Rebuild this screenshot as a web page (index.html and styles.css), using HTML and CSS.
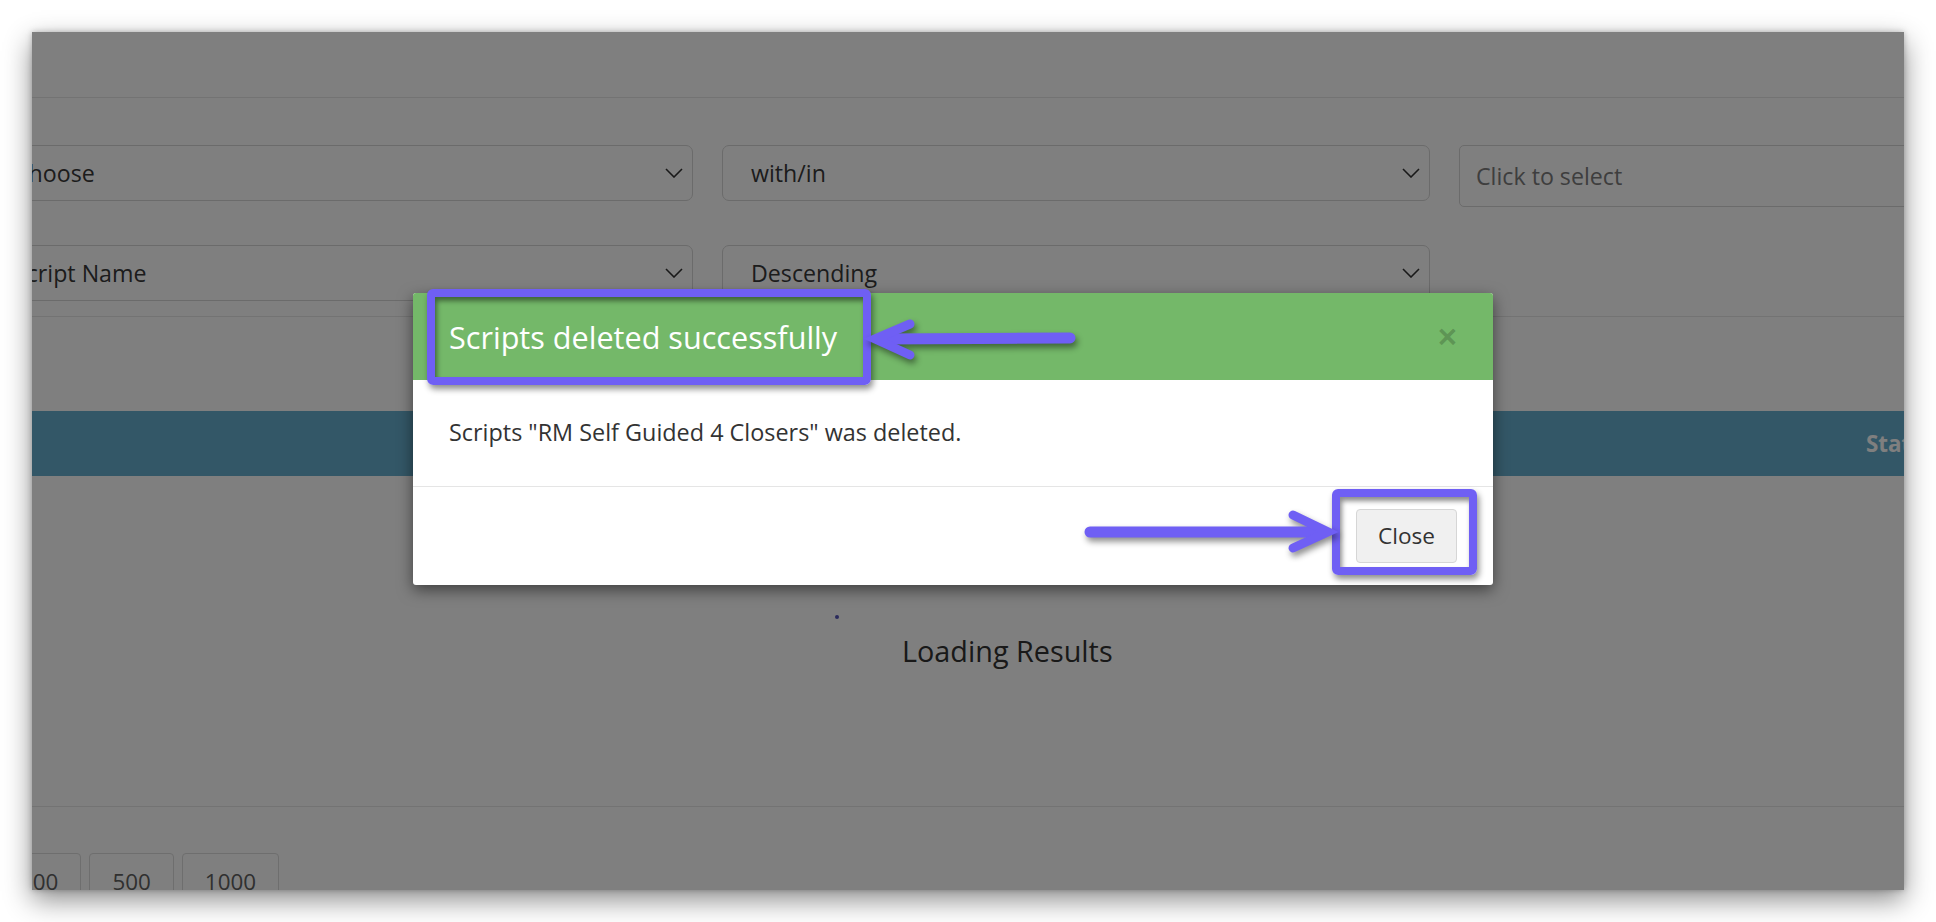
FILE: index.html
```html
<!DOCTYPE html>
<html lang="en">
<head>
<meta charset="utf-8">
<title>Scripts deleted successfully</title>
<link rel="stylesheet" href="styles.css">
</head>
<body>
<div class="shot">
  <div class="page">
    <div class="topbar"></div>
    <div class="filters">
      <div class="select"><span>Choose</span><svg class="chev" viewBox="0 0 18 10"><polyline points="1,1 9,9 17,1"/></svg></div>
      <div class="select"><span>with/in</span><svg class="chev" viewBox="0 0 18 10"><polyline points="1,1 9,9 17,1"/></svg></div>
      <div class="input"><span class="placeholder">Click to select</span></div>
      <div class="select"><span>Script Name</span><svg class="chev" viewBox="0 0 18 10"><polyline points="1,1 9,9 17,1"/></svg></div>
      <div class="select"><span>Descending</span><svg class="chev" viewBox="0 0 18 10"><polyline points="1,1 9,9 17,1"/></svg></div>
    </div>
    <div class="table-head"><div class="th th-main"></div><div class="th">Status</div></div>
    <div class="loading">
      <span class="loader-dot"></span>
      <h3 class="loading-text">Loading Results</h3>
    </div>
    <div class="pager">
      <button class="page-btn">100</button>
      <button class="page-btn">500</button>
      <button class="page-btn">1000</button>
    </div>
  </div>
  <div class="backdrop"></div>
  <div class="modal">
    <div class="modal-header">
      <h4 class="modal-title">Scripts deleted successfully</h4>
      <span class="close-x">×</span>
    </div>
    <div class="modal-body">
      <p>Scripts "RM Self Guided 4 Closers" was deleted.</p>
    </div>
    <div class="modal-footer">
      <button class="btn-close">Close</button>
    </div>
    <div class="mark mark-title"></div>
    <div class="mark mark-close"></div>
    <svg class="arrows" width="1080" height="292" viewBox="0 0 1080 292">
      <line class="shaft" x1="657" y1="45" x2="468" y2="46"/>
      <polyline class="head" points="497,31 462,46 497,62"/>
      <line class="shaft" x1="677" y1="239" x2="909" y2="239"/>
      <polyline class="head" points="880,222 915,239 880,255"/>
    </svg>
  </div>
</div>
</body>
</html>
```

FILE: styles.css
```css
* { box-sizing: border-box; }

html, body {
  margin: 0;
  padding: 0;
  background: #ffffff;
  overflow: hidden;
}

body {
  font-family: "Open Sans", "Noto Sans", sans-serif;
  color: #333333;
}

.shot {
  position: relative;
  margin: 32px;
  width: 1872px;
  height: 858px;
  overflow: hidden;
  background: #ffffff;
  box-shadow: 0 10px 26px rgba(0, 0, 0, 0.45), 0 0 6px rgba(0, 0, 0, 0.25);
}

.page {
  width: 2300px;
  margin-left: -47px;
  font-size: 23.2px;
}

.topbar {
  height: 66px;
  border-bottom: 1px solid #e6e6e6;
}

.filters {
  display: grid;
  grid-template-columns: repeat(3, 708px);
  column-gap: 29px;
  row-gap: 38px;
  align-items: start;
  padding: 47px 0 15px;
  border-bottom: 1px solid #e6e6e6;
}

.select {
  height: 56px;
  display: flex;
  align-items: center;
  justify-content: space-between;
  padding: 0 9px 0 28px;
  border: 1px solid #d6d6d6;
  border-radius: 7px;
  color: #383838;
}

.chev {
  width: 18px;
  height: 10px;
  fill: none;
  stroke: #333333;
  stroke-width: 1.6;
}

.input {
  height: 62px;
  display: flex;
  align-items: center;
  padding-left: 16px;
  border: 1px solid #d6d6d6;
  border-radius: 5px;
}

.placeholder {
  color: #7c7c7c;
}

.table-head {
  display: flex;
  align-items: center;
  height: 65px;
  margin-top: 94px;
  background: #66aece;
  color: #ffffff;
  font-weight: 700;
  font-size: 22.4px;
}

.th-main {
  width: 1881px;
}

.loading {
  height: 331px;
  padding: 139px 0 0 850px;
  border-bottom: 1px solid #e6e6e6;
}

.loader-dot {
  display: block;
  width: 4px;
  height: 4px;
  border-radius: 50%;
  background: #5656b8;
}

.loading-text {
  margin: 15px 0 0 67px;
  font-size: 28.8px;
  font-weight: 400;
  line-height: 34px;
  color: #333333;
}

.pager {
  display: flex;
  gap: 8px;
  padding: 46px 0 0 12px;
}

.page-btn {
  height: 56px;
  padding: 0 22px;
  font-family: inherit;
  font-size: 22.4px;
  color: #606060;
  background: #ffffff;
  border: 1px solid #dcdcdc;
  border-radius: 4px;
}

.backdrop {
  position: absolute;
  inset: 0;
  background: rgba(0, 0, 0, 0.5);
}

.modal {
  position: absolute;
  left: 381px;
  top: 261px;
  width: 1080px;
  background: #ffffff;
  border-radius: 3px;
  box-shadow: 0 5px 15px rgba(0, 0, 0, 0.5);
  font-size: 23.4px;
}

.modal-header {
  height: 87px;
  display: flex;
  align-items: center;
  justify-content: space-between;
  padding: 0 36px 0 36px;
  background: #74b869;
  border-radius: 3px 3px 0 0;
}

.modal-title {
  margin: 0;
  font-size: 30.6px;
  font-weight: 400;
  color: #ffffff;
}

.close-x {
  font-family: "Liberation Sans", Arial, sans-serif;
  font-size: 33px;
  font-weight: 700;
  line-height: 1;
  color: rgba(0, 0, 0, 0.2);
}

.modal-body {
  padding: 36px;
}

.modal-body p {
  margin: 0;
  line-height: 33.6px;
  color: #333333;
}

.modal-footer {
  display: flex;
  justify-content: flex-end;
  padding: 22px 36px 22px;
  border-top: 1px solid #e5e5e5;
}

.btn-close {
  height: 54px;
  padding: 0 21px;
  font-family: inherit;
  font-size: 22.6px;
  color: #333333;
  background: #f0f0f0;
  border: 1px solid #d6d6d6;
  border-radius: 4px;
}

.mark {
  position: absolute;
  border: 8px solid #6f5ff4;
  border-radius: 6px;
  box-shadow: 2px 4px 6px rgba(0, 0, 0, 0.45), inset 2px 4px 5px rgba(0, 0, 0, 0.45);
}

.mark-title {
  left: 14px;
  top: -4px;
  width: 444px;
  height: 96px;
}

.mark-close {
  left: 919px;
  top: 196px;
  width: 145px;
  height: 86px;
}

.arrows {
  position: absolute;
  left: 0;
  top: 0;
  overflow: visible;
  pointer-events: none;
  filter: drop-shadow(2px 4px 3px rgba(0, 0, 0, 0.45));
}

.arrows .shaft {
  stroke: #6f5ff4;
  stroke-width: 11;
  stroke-linecap: round;
}

.arrows .head {
  fill: none;
  stroke: #6f5ff4;
  stroke-width: 9;
  stroke-linecap: round;
  stroke-linejoin: miter;
  stroke-miterlimit: 8;
}
```
